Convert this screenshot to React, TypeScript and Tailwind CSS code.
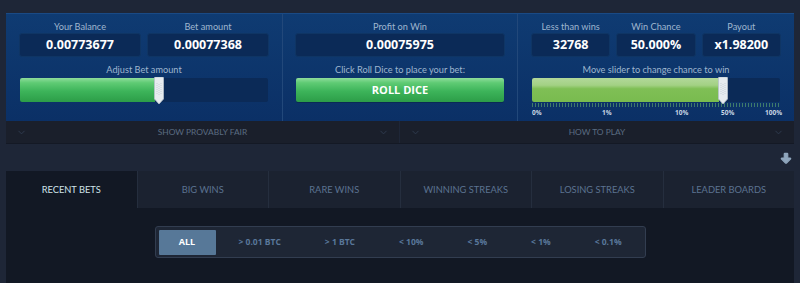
import React from 'react';
import { ChevronDown, ArrowBigDown } from 'lucide-react';

const font = { fontFamily: '"Open Sans", "Liberation Sans", sans-serif' };
const lato = { fontFamily: 'Lato, "Open Sans", sans-serif' };

function Label({ children, className = '' }: { children: React.ReactNode; className?: string }) {
  return (
    <div className={`text-[9.2px] leading-[12px] text-[#9fb6cf] text-center ${className}`} style={lato}>
      {children}
    </div>
  );
}

function ValueBox({ label, value, className = '' }: { label: string; value: string; className?: string }) {
  return (
    <div className={`flex flex-col items-center ${className}`}>
      <Label>{label}</Label>
      <div className="w-full h-[24px] rounded-[3px] bg-[#0b2a57] border border-[#0f3564] flex items-center justify-center text-white font-bold text-[12.5px]">
        {value}
      </div>
    </div>
  );
}

function Handle() {
  return (
    <svg width="10" height="28" viewBox="0 0 10 28" className="absolute top-[-1px]">
      <path d="M0.5 1 Q0.5 0 1.5 0 H8.5 Q9.5 0 9.5 1 V22 L5 27 L0.5 22 Z" fill="#e6ebef" stroke="#b8c2cc" strokeWidth="0.8" />
      <path d="M3 6 V18 M5 7 V19 M7 6 V18" stroke="#c9d2da" strokeWidth="1" strokeDasharray="1 1" />
    </svg>
  );
}

function Slider({ pct, green }: { pct: number; green: 'bet' | 'chance' }) {
  const fill =
    green === 'bet'
      ? 'bg-[linear-gradient(#8fdc9c_0%,#5fcb74_20%,#3db45a_55%,#2c9d48_100%)]'
      : 'bg-[linear-gradient(#b2d89a_0%,#a3d184_30%,#7fbf55_45%,#79bb4f_100%)]';
  return (
    <div className="relative h-[24px] rounded-[2px] bg-[#0b2a57]">
      <div className={`h-full rounded-l-[2px] ${fill}`} style={{ width: `${pct}%` }} />
      <div className="absolute top-0" style={{ left: `calc(${pct}% - 1px)` }}>
        <Handle />
      </div>
    </div>
  );
}

const tabs = ['RECENT BETS', 'BIG WINS', 'RARE WINS', 'WINNING STREAKS', 'LOSING STREAKS', 'LEADER BOARDS'];
const filters = ['> 0.01 BTC', '> 1 BTC', '< 10%', '< 5%', '< 1%', '< 0.1%'];

export default function App() {
  return (
    <div className="w-[800px] h-[283px] overflow-hidden bg-[#1e2637] pt-[13px]" style={font}>
      <div className="mx-[6px] w-[788px]">
        {/* top panel */}
        <div className="flex h-[108px] bg-[linear-gradient(#0f3b72,#0b3066)] border-t border-[#1a4a85]">
          <div className="w-[277px] border-r border-[#22487a] px-[13px] pt-[7px]">
            <div className="flex gap-[6px]">
              <ValueBox label="Your Balance" value="0.00773677" className="flex-1" />
              <ValueBox label="Bet amount" value="0.00077368" className="flex-1" />
            </div>
            <Label className="mt-[7px] mb-[2px]">Adjust Bet amount</Label>
            <div className="px-[1px]">
              <Slider pct={54.5} green="bet" />
            </div>
          </div>

          <div className="w-[235px] border-r border-[#22487a] px-[12px] pt-[7px]">
            <ValueBox label="Profit on Win" value="0.00075975" />
            <Label className="mt-[7px] mb-[2px]">Click Roll Dice to place your bet:</Label>
            <div className="mx-[1px] h-[24px] rounded-[2px] bg-[linear-gradient(#8fdc9c_0%,#5fcb74_20%,#3db45a_55%,#2c9d48_100%)] flex items-center justify-center text-white font-bold text-[11px] shadow-[0_1px_0_#0a2a55]">
              ROLL DICE
            </div>
          </div>

          <div className="flex-1 px-[13px] pt-[7px]">
            <div className="flex gap-[6px]">
              <ValueBox label="Less than wins" value="32768" className="flex-1" />
              <ValueBox label="Win Chance" value="50.000%" className="flex-1" />
              <ValueBox label="Payout" value="x1.98200" className="flex-1" />
            </div>
            <Label className="mt-[7px] mb-[2px]">Move slider to change chance to win</Label>
            <div className="px-[1px]">
              <Slider pct={75.5} green="chance" />
              <div className="h-[4px] mt-[1px] bg-[repeating-linear-gradient(90deg,#3f7a6a_0px,#3f7a6a_1px,transparent_1px,transparent_3px)]" />
              <div className="relative h-[10px] text-[6.5px] font-bold text-[#c8d6e4]">
                <span className="absolute left-[0px] top-[1px]">0%</span>
                <span className="absolute left-[70px] top-[1px]">1%</span>
                <span className="absolute left-[143px] top-[1px]">10%</span>
                <span className="absolute left-[189px] top-[1px]">50%</span>
                <span className="absolute right-[-2px] top-[1px]">100%</span>
              </div>
            </div>
          </div>
        </div>

        {/* collapsibles */}
        <div className="flex h-[23px] border-b border-[#141925]" style={lato}>
          <div className="w-[393px] bg-[#1a1f2b] flex items-center justify-between px-[10px] mr-[1px]">
            <ChevronDown size={11} className="text-[#2f3c50]" />
            <span className="text-[8.4px] text-[#5a6c82]">SHOW PROVABLY FAIR</span>
            <ChevronDown size={11} className="text-[#2f3c50]" />
          </div>
          <div className="flex-1 bg-[#1a1f2b] flex items-center justify-between px-[10px]">
            <ChevronDown size={11} className="text-[#2f3c50]" />
            <span className="text-[8.4px] text-[#5a6c82]">HOW TO PLAY</span>
            <ChevronDown size={11} className="text-[#2f3c50]" />
          </div>
        </div>

        {/* spacer with arrow */}
        <div className="h-[27px] flex items-center justify-end pr-[1px]">
          <ArrowBigDown size={14} className="text-[#8fa6bd] fill-[#8fa6bd]" />
        </div>

        {/* tabs */}
        <div className="flex h-[37px]" style={lato}>
          {tabs.map((t, i) => (
            <div
              key={t}
              className={`flex-1 flex items-center justify-center text-[9.3px] ${
                i === 0
                  ? 'bg-[#121824] text-[#cfe2e8]'
                  : 'bg-[#1b2230] text-[#5b7391] border-l border-[#252e3e]'
              }`}
            >
              {t}
            </div>
          ))}
        </div>

        {/* content */}
        <div className="h-[80px] bg-[#121824] flex justify-center pt-[18px]">
          <div className="w-[491px] h-[32px] rounded-[3px] bg-[#1e2635] border border-[#323d50] flex items-center px-[3px]">
            <div className="w-[57px] h-[25px] bg-[#577898] rounded-[1px] flex items-center justify-center text-white font-bold text-[9px]">
              ALL
            </div>
            <div className="flex gap-[44px] ml-[23px]">
              {filters.map((f) => (
                <span key={f} className="text-[8.5px] font-bold text-[#59779a]">
                  {f}
                </span>
              ))}
            </div>
          </div>
        </div>
      </div>
    </div>
  );
}
